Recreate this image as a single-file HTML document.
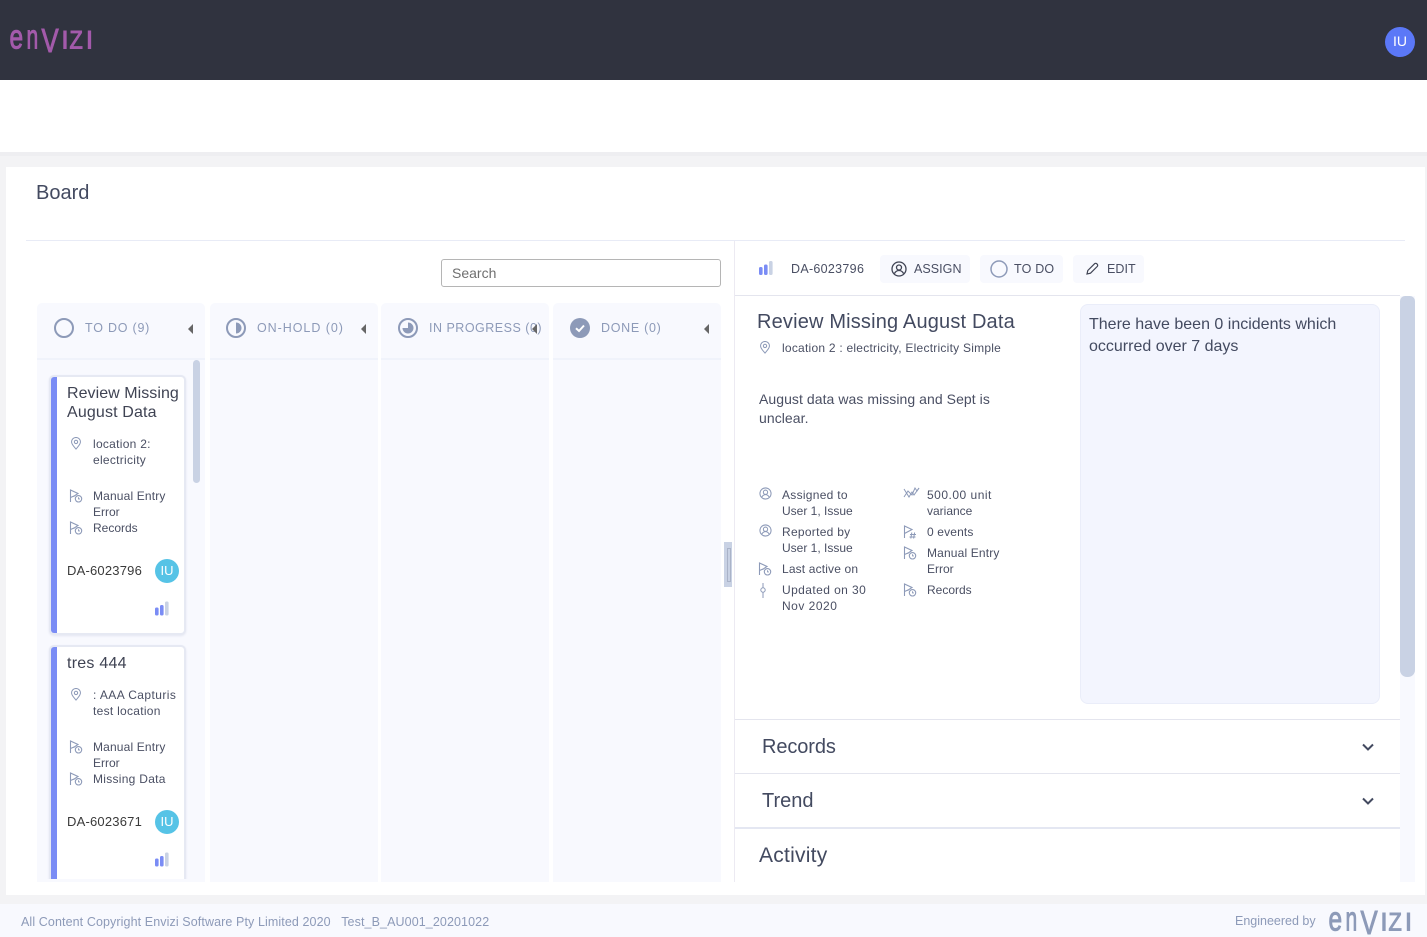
<!DOCTYPE html>
<html><head><meta charset="utf-8"><title>Board</title>
<style>
html,body{margin:0;padding:0;width:1427px;height:937px;overflow:hidden;background:#fff;font-family:"Liberation Sans",sans-serif;}
.a{position:absolute;}
.t{position:absolute;white-space:nowrap;color:#4a4f63;font-size:12px;line-height:16px;}
.l1{letter-spacing:.15px}.l2{letter-spacing:.28px}.l3{letter-spacing:.42px}
.col{position:absolute;top:303px;width:168px;height:579px;background:#f8f9fe;border-radius:5px 5px 0 0;}
.col i{position:absolute;left:0;right:0;top:55px;height:2px;background:#f0f3fb;}
.h{position:absolute;white-space:nowrap;color:#8d9ab8;font-size:12.5px;letter-spacing:.78px;line-height:16px;}
.tri{position:absolute;width:0;height:0;border-top:5px solid transparent;border-bottom:5px solid transparent;border-right:5px solid #666;top:324px;}
.card{position:absolute;left:51px;width:133px;background:#fff;border-radius:3px;box-shadow:0 0 0 2px #e6e9f3,0 1px 2px 2px #e3e6f1;overflow:hidden;}
.card b{position:absolute;left:0;top:0;bottom:0;width:6px;background:#7a8cf5;}
.btn{position:absolute;top:255px;height:28px;background:#f8f9fe;border-radius:4px;}
svg{position:absolute;overflow:visible;}
.acc{position:absolute;left:735px;width:665px;height:1px;background:#e4e5ee;}
.lg{font-family:"Liberation Sans",sans-serif;}
</style></head><body>
<svg width="0" height="0" style="position:absolute"><defs>
<symbol id="pin" viewBox="0 0 12 14"><path d="M6 13C3.5 10 1.2 8 1.2 5.3a4.8 4.8 0 0 1 9.6 0C10.800 8 8.500 10 6 13z" fill="none" stroke="#8d9ab8" stroke-width="1.100"/><circle cx="6" cy="5.300" r="1.800" fill="none" stroke="#8d9ab8" stroke-width="1.100"/></symbol>
<symbol id="flag" viewBox="0 0 14 14"><path d="M1.500 13V1L9 4.500 4.500 7.500" fill="none" stroke="#8d9ab8" stroke-width="1.100"/><path d="M1.500 8.500 5 7" fill="none" stroke="#8d9ab8" stroke-width="1.100"/><circle cx="9.500" cy="9.800" r="3.200" fill="none" stroke="#8d9ab8" stroke-width="1.100"/><path d="M9.500 8.200v1.700h1.500" fill="none" stroke="#8d9ab8" stroke-width=".9"/></symbol>
<symbol id="flaghash" viewBox="0 0 14 14"><path d="M1.500 13V1L9 4.500 1.500 8.500" fill="none" stroke="#8d9ab8" stroke-width="1.100"/><path d="M7 9.500h6M6.500 12h6M8.800 7.500l-1 6M11.600 7.500l-1 6" fill="none" stroke="#8d9ab8" stroke-width="1"/></symbol>
<symbol id="user" viewBox="0 0 14 14"><circle cx="7" cy="7" r="6" fill="none" stroke="#8d9ab8" stroke-width="1.100"/><circle cx="7" cy="5.600" r="2.300" fill="none" stroke="#8d9ab8" stroke-width="1.100"/><path d="M3 11c1-2 2.500-2.800 4-2.800s3 .8 4 2.800" fill="none" stroke="#8d9ab8" stroke-width="1.100"/></symbol>
<symbol id="bars" viewBox="0 0 14 14"><rect x="0" y="6" width="3.600" height="8" rx="1.500" fill="#7a8cf5"/><rect x="5" y="3.500" width="3.600" height="10.500" rx="1.500" fill="#7a8cf5"/><rect x="10" y="0" width="3.600" height="14" rx="1.500" fill="#c9d2e4"/></symbol>
</defs></svg>

<!-- header -->
<div class="a" style="left:0;top:0;width:1427px;height:80px;background:#30333f"></div>
<svg style="left:0;top:0" width="120" height="80"><g class="lg" fill="#a35aab" stroke="#a35aab" stroke-width="1">
<text transform="translate(9.500,48.500) scale(.72,1)" font-size="34">e</text>
<text transform="translate(26.500,48.500) scale(.62,1)" font-size="34">n</text>
<text transform="translate(41.500,52) scale(.78,1)" font-size="33">V</text>
<text transform="translate(61.500,48.500)" font-size="25">I</text>
<text transform="translate(69.500,48.500) scale(.87,1)" font-size="25">Z</text>
<text transform="translate(86,48.500)" font-size="25">I</text></g></svg>
<div class="a" style="left:1385px;top:27px;width:30px;height:30px;border-radius:50%;background:#5b78f7;color:#fff;font-size:14px;line-height:28px;text-align:center">IU</div>

<!-- page bg -->
<div class="a" style="left:0;top:152px;width:1427px;height:752px;background:#f3f3f5"></div>
<div class="a" style="left:0;top:152px;width:1427px;height:4px;background:#eeeef1"></div>
<div class="a" style="left:6px;top:167px;width:1419px;height:728px;background:#fff"></div>
<div class="a" style="left:0;top:904px;width:1427px;height:33px;background:#f8f9fe"></div>

<div class="t" style="left:36px;top:181px;font-size:20px;line-height:24px;color:#434a60;">Board</div>
<div class="a" style="left:26px;top:240px;width:1379px;height:1px;background:#e8ebf6"></div>
<div class="a" style="left:734px;top:241px;width:1px;height:641px;background:#eceaf2"></div>

<!-- search -->
<div class="a" style="left:441px;top:259px;width:278px;height:26px;border:1px solid #b5b5b5;border-radius:3px;background:#fff"></div>
<div class="t" style="left:452px;top:265px;font-size:14px;color:#6f6f6f">Search</div>

<!-- columns -->
<div class="col" style="left:37px"><i></i></div>
<div class="col" style="left:210px"><i></i></div>
<div class="col" style="left:381px"><i></i></div>
<div class="col" style="left:553px"><i></i></div>

<svg style="left:54px;top:318px" width="20" height="20"><circle cx="10" cy="10" r="9" fill="none" stroke="#8d9ab8" stroke-width="2"/></svg>
<div class="h" style="left:85px;top:320px">TO DO (9)</div>
<div class="tri" style="left:188px"></div>

<svg style="left:226px;top:318px" width="20" height="20"><circle cx="10" cy="10" r="9" fill="none" stroke="#8d9ab8" stroke-width="2"/><path d="M10 4.500a5.500 5.500 0 0 1 0 11z" fill="#8d9ab8"/></svg>
<div class="h" style="left:257px;top:320px;letter-spacing:.95px">ON-HOLD (0)</div>
<div class="tri" style="left:361px"></div>

<svg style="left:398px;top:318px" width="20" height="20"><circle cx="10" cy="10" r="9" fill="none" stroke="#8d9ab8" stroke-width="2"/><path d="M10 4.500a5.500 5.500 0 1 1-5.500 5.500H10z" fill="#8d9ab8"/></svg>
<div class="h" style="left:429px;top:320px;letter-spacing:.5px">IN PROGRESS (0)</div>
<div class="tri" style="left:532px"></div>

<svg style="left:570px;top:318px" width="20" height="20"><circle cx="10" cy="10" r="10" fill="#8d9ab8"/><path d="M6 10.300l3 2.700 5-5.500" fill="none" stroke="#fff" stroke-width="2"/></svg>
<div class="h" style="left:601px;top:320px;letter-spacing:.7px">DONE (0)</div>
<div class="tri" style="left:704px"></div>

<!-- todo scrollbar -->
<div class="a" style="left:193px;top:360px;width:7px;height:123px;border-radius:4px;background:#c9d2e4"></div>

<!-- card 1 -->
<div class="card" style="top:377px;height:256px"><b></b></div>
<div class="t" style="left:67px;top:384px;font-size:16px;line-height:19px;color:#3f4353;"><span style="letter-spacing:.05px">Review Missing</span><br><span class="l1">August Data</span></div>
<svg style="left:70px;top:437px" width="12" height="13"><use href="#pin"/></svg>
<div class="t" style="left:93px;top:436px"><span class="l2">location 2:</span><br><span class="l2">electricity</span></div>
<svg style="left:69px;top:489px" width="14" height="14"><use href="#flag"/></svg>
<div class="t" style="left:93px;top:488px"><span class="l1">Manual Entry</span><br>Error<br>Records</div>
<svg style="left:69px;top:521px" width="14" height="14"><use href="#flag"/></svg>
<div class="t l1" style="left:67px;top:563px;font-size:13px;color:#3a3a3a;letter-spacing:.2px">DA-6023796</div>
<div class="a" style="left:155px;top:559px;width:24px;height:24px;border-radius:50%;background:#56c3e6;color:#fff;font-size:13px;line-height:24px;text-align:center">IU</div>
<svg style="left:155px;top:601px" width="14" height="15"><use href="#bars"/></svg>

<!-- card 2 -->
<div class="card" style="top:647px;height:240px"><b></b></div>
<div class="t" style="left:67px;top:654px;font-size:16px;line-height:19px;color:#3f4353;letter-spacing:.25px">tres 444</div>
<svg style="left:70px;top:688px" width="12" height="13"><use href="#pin"/></svg>
<div class="t" style="left:93px;top:687px"><span class="l3">: AAA Capturis</span><br><span class="l2">test location</span></div>
<svg style="left:69px;top:740px" width="14" height="14"><use href="#flag"/></svg>
<div class="t" style="left:93px;top:739px"><span class="l1">Manual Entry</span><br>Error<br><span class="l2">Missing Data</span></div>
<svg style="left:69px;top:772px" width="14" height="14"><use href="#flag"/></svg>
<div class="t" style="left:67px;top:814px;font-size:13px;color:#3a3a3a;letter-spacing:.2px">DA-6023671</div>
<div class="a" style="left:155px;top:810px;width:24px;height:24px;border-radius:50%;background:#56c3e6;color:#fff;font-size:13px;line-height:24px;text-align:center">IU</div>
<svg style="left:155px;top:852px" width="14" height="15"><use href="#bars"/></svg>
<!-- mask beneath columns -->
<div class="a" style="left:37px;top:879px;width:168px;height:3px;background:#f8f9fe"></div>
<div class="a" style="left:205px;top:879px;width:5px;height:3px;background:#fff"></div>
<div class="a" style="left:378px;top:303px;width:3px;height:579px;background:#fff"></div>
<div class="a" style="left:549px;top:303px;width:4px;height:579px;background:#fff"></div>
<div class="a" style="left:0;top:882px;width:734px;height:13px;background:#fff"></div>
<div class="a" style="left:0;top:882px;width:6px;height:22px;background:#f3f3f5"></div>
<div class="a" style="left:0;top:895px;width:734px;height:9px;background:#f3f3f5"></div>

<!-- splitter -->
<div class="a" style="left:724px;top:542px;width:8px;height:45px;background:#c9d2e4"></div>
<div class="a" style="left:727px;top:548px;width:2px;height:32px;border:1px solid #aab3c8"></div>

<!-- detail toolbar -->
<svg style="left:759px;top:261px" width="14" height="14"><use href="#bars"/></svg>
<div class="t" style="left:791px;top:261px;font-size:12.500px;letter-spacing:.3px;color:#4a4f63">DA-6023796</div>
<div class="btn" style="left:880px;width:90px"></div>
<svg style="left:891px;top:261px" width="16" height="16"><circle cx="8" cy="8" r="7" fill="none" stroke="#3f4353" stroke-width="1.300"/><circle cx="8" cy="6.500" r="2.500" fill="none" stroke="#3f4353" stroke-width="1.300"/><path d="M3.500 12.500c1-2 2.800-3 4.500-3s3.500 1 4.500 3" fill="none" stroke="#3f4353" stroke-width="1.300"/></svg>
<div class="t" style="left:914px;top:261px;font-size:12.500px;letter-spacing:.05px;color:#4a4f63">ASSIGN</div>
<div class="btn" style="left:980px;width:83px"></div>
<svg style="left:990px;top:260px" width="18" height="18"><circle cx="9" cy="9" r="8" fill="none" stroke="#8d9ab8" stroke-width="1.500"/></svg>
<div class="t" style="left:1014px;top:261px;font-size:12.500px;letter-spacing:.2px;color:#4a4f63">TO DO</div>
<div class="btn" style="left:1073px;width:71px"></div>
<svg style="left:1086px;top:262px" width="13" height="13"><path d="M1 12l.8-3.500L8.500 1.800a1.600 1.600 0 0 1 2.300 0l.4.400a1.600 1.600 0 0 1 0 2.300L4.500 11.200z" fill="none" stroke="#3f4353" stroke-width="1.200"/></svg>
<div class="t" style="left:1107px;top:261px;font-size:12.500px;letter-spacing:.05px;color:#4a4f63">EDIT</div>
<div class="a" style="left:735px;top:295px;width:665px;height:1px;background:#e4e5ee"></div>

<!-- detail -->
<div class="t" style="left:757px;top:310px;font-size:20px;line-height:24px;color:#434a60;letter-spacing:.17px">Review Missing August Data</div>
<svg style="left:759px;top:341px" width="12" height="13"><use href="#pin"/></svg>
<div class="t" style="left:782px;top:340px;letter-spacing:.24px">location 2 : electricity, Electricity Simple</div>
<div class="t" style="left:759px;top:390px;font-size:14px;line-height:19px;color:#4a4f63;letter-spacing:.06px">August data was missing and Sept is<br>unclear.</div>

<svg style="left:759px;top:487px" width="13" height="13"><use href="#user"/></svg>
<div class="t" style="left:782px;top:487px"><span class="l2">Assigned to</span><br>User 1, Issue</div>
<svg style="left:759px;top:524px" width="13" height="13"><use href="#user"/></svg>
<div class="t" style="left:782px;top:524px"><span class="l2">Reported by</span><br>User 1, Issue</div>
<svg style="left:758px;top:562px" width="14" height="14"><use href="#flag"/></svg>
<div class="t l1" style="left:782px;top:561px">Last active on</div>
<svg style="left:759px;top:583px" width="8" height="15"><path d="M4 0v15" stroke="#8d9ab8" stroke-width="1"/><circle cx="4" cy="7" r="2.200" fill="#fff" stroke="#8d9ab8"/></svg>
<div class="t" style="left:782px;top:582px"><span class="l3">Updated on 30</span><br><span style="letter-spacing:.5px">Nov 2020</span></div>

<svg style="left:904px;top:488px" width="16" height="11"><path d="M0 1l5 8 3-5 2 3 5-7" fill="none" stroke="#8d9ab8" stroke-width="1"/><path d="M0 9l4-6 4 4 3-7 2 3 2-3" fill="none" stroke="#8d9ab8" stroke-width="1"/></svg>
<div class="t" style="left:927px;top:487px"><span style="letter-spacing:.5px">500.00 unit</span><br>variance</div>
<svg style="left:903px;top:525px" width="14" height="14"><use href="#flaghash"/></svg>
<div class="t l1" style="left:927px;top:524px">0 events</div>
<svg style="left:903px;top:546px" width="14" height="14"><use href="#flag"/></svg>
<div class="t" style="left:927px;top:545px"><span class="l1">Manual Entry</span><br>Error</div>
<svg style="left:903px;top:583px" width="14" height="14"><use href="#flag"/></svg>
<div class="t" style="left:927px;top:582px">Records</div>

<!-- incident panel -->
<div class="a" style="left:1080px;top:304px;width:298px;height:398px;background:#f3f5fe;border:1px solid #eaedf9;border-radius:8px"></div>
<div class="t" style="left:1089px;top:314px;font-size:16px;line-height:22px;color:#434a60">There have been 0 incidents which<br>occurred over 7 days</div>

<!-- accordions -->
<div class="acc" style="top:719px"></div>
<div class="t" style="left:762px;top:735px;font-size:20px;line-height:24px;color:#434a60;letter-spacing:-.1px">Records</div>
<svg style="left:1362px;top:743px" width="12" height="9"><path d="M1 1.500l5 5 5-5" fill="none" stroke="#434a60" stroke-width="2"/></svg>
<div class="acc" style="top:773px"></div>
<div class="t" style="left:762px;top:789px;font-size:20px;line-height:24px;color:#434a60">Trend</div>
<svg style="left:1362px;top:797px" width="12" height="9"><path d="M1 1.500l5 5 5-5" fill="none" stroke="#434a60" stroke-width="2"/></svg>
<div class="a" style="left:735px;top:827px;width:665px;height:2px;background:#e4e7f2"></div>
<div class="t" style="left:759px;top:844px;font-size:21px;line-height:24px;color:#434a60;letter-spacing:.25px">Activity</div>

<!-- detail scrollbar -->
<div class="a" style="left:1400px;top:296px;width:15px;height:586px;background:#f8f9fe"></div>
<div class="a" style="left:1400px;top:296px;width:15px;height:381px;background:#c9d2e4;border-radius:5px 5px 7px 7px"></div>

<!-- footer -->
<div class="t" style="left:21px;top:914px;font-size:12.500px;letter-spacing:.1px;color:#8d9ab8">All Content Copyright Envizi Software Pty Limited 2020 &nbsp; Test_B_AU001_20201022</div>
<div class="t" style="left:1235px;top:913px;font-size:12.500px;color:#8d9ab8">Engineered by</div>
<svg style="left:1319px;top:882px" width="100" height="55"><g class="lg" fill="#8d9ab8" stroke="#8d9ab8" stroke-width="1">
<text transform="translate(9.500,48.500) scale(.72,1)" font-size="34">e</text>
<text transform="translate(26.500,48.500) scale(.62,1)" font-size="34">n</text>
<text transform="translate(41.500,52) scale(.78,1)" font-size="33">V</text>
<text transform="translate(61.500,48.500)" font-size="25">I</text>
<text transform="translate(69.500,48.500) scale(.87,1)" font-size="25">Z</text>
<text transform="translate(86,48.500)" font-size="25">I</text></g></svg>
</body></html>
